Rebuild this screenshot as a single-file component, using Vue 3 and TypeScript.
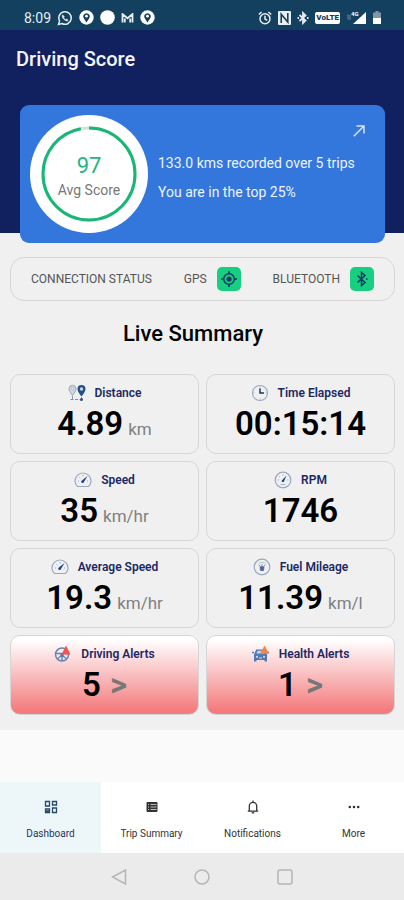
<script setup lang="ts">
type MetricIcon = 'route' | 'clock' | 'speed' | 'rpm' | 'fuel' | 'wheel' | 'car'

interface Metric {
  label: string
  value: string
  unit?: string
  icon: MetricIcon
}

interface Tab {
  label: string
  icon: 'grid' | 'list' | 'bell' | 'dots'
}

const score = 97
const ringLength = 2 * Math.PI * 46

const metrics: Metric[] = [
  { label: 'Distance', value: '4.89', unit: 'km', icon: 'route' },
  { label: 'Time Elapsed', value: '00:15:14', icon: 'clock' },
  { label: 'Speed', value: '35', unit: 'km/hr', icon: 'speed' },
  { label: 'RPM', value: '1746', icon: 'rpm' },
  { label: 'Average Speed', value: '19.3', unit: 'km/hr', icon: 'speed' },
  { label: 'Fuel Mileage', value: '11.39', unit: 'km/l', icon: 'fuel' },
]

const alerts: Metric[] = [
  { label: 'Driving Alerts', value: '5', icon: 'wheel' },
  { label: 'Health Alerts', value: '1', icon: 'car' },
]

const tabs: Tab[] = [
  { label: 'Dashboard', icon: 'grid' },
  { label: 'Trip Summary', icon: 'list' },
  { label: 'Notifications', icon: 'bell' },
  { label: 'More', icon: 'dots' },
]
</script>

<template>
  <div class="screen">
    <div class="status">
      <div class="status-group">
        <span class="time">8:09</span>
        <svg width="16" height="16" viewBox="0 0 16 16" fill="none" stroke="#e6edf2">
          <path d="M1.5 14.5l1-3.4a6.3 6.3 0 1 1 2.4 2.4z" stroke-width="1.5" />
          <path d="M5.600 4.800c-1.200 1.400.2 3.500 1.500 4.700 1.300 1.200 3 2.100 4.100.8l-1.500-1.200-1 .6c-.9-.4-1.600-1.100-2-2l.6-1z" fill="#e6edf2" stroke-width=".6" />
        </svg>
        <svg width="15" height="15" viewBox="0 0 15 15">
          <circle cx="7.500" cy="7.500" r="7.200" fill="#fff" />
          <path d="M7.500 12.500L4.600 8A3.300 3.300 0 1 1 10.400 8z" fill="#14405f" />
          <circle cx="7.500" cy="6.200" r="1.400" fill="#fff" />
        </svg>
        <svg width="15" height="15" viewBox="0 0 15 15"><circle cx="7.500" cy="7.500" r="7.300" fill="#fff" /></svg>
        <svg width="13" height="10" viewBox="0 0 13 10" fill="none" stroke="#e6edf2" stroke-width="1.800">
          <path d="M1.500 9.500V1L6.500 5.200 11.500 1v8.500M3.800 9.500V5.500M9.200 9.500V5.500" />
        </svg>
        <svg width="15" height="15" viewBox="0 0 15 15">
          <circle cx="7.500" cy="7.500" r="7.200" fill="#fff" />
          <path d="M7.500 12.500L4.600 8A3.300 3.300 0 1 1 10.400 8z" fill="#14405f" />
          <circle cx="7.500" cy="6.200" r="1.400" fill="#fff" />
        </svg>
      </div>
      <div class="status-group">
        <svg width="14" height="14" viewBox="0 0 14 14" fill="none" stroke="#e6edf2" stroke-width="1.500">
          <circle cx="7" cy="7.700" r="5" />
          <path d="M7 4.700v3.300l2.200 1.400M.8 3.500L3.600 1M13.200 3.500L10.400 1" />
        </svg>
        <svg width="13" height="14" viewBox="0 0 13 14">
          <rect width="13" height="14" rx="1" fill="#e9eff3" />
          <path d="M3.200 12V3.200L9.800 11V2" fill="none" stroke="#14405f" stroke-width="1.600" />
        </svg>
        <svg width="12" height="14" viewBox="0 0 12 14" fill="none" stroke="#e6edf2" stroke-width="1.800">
          <path d="M2.500 4l6 5.500L6 12V2l2.500 2.500-6 5.500" />
          <path d="M.5 7h1.500M10 7h1.500" />
        </svg>
        <span class="volte">VoLTE</span>
        <svg width="21" height="15" viewBox="0 0 21 15">
          <path d="M2 4.500v5M4 5v5" stroke="#6f8ca0" stroke-width="1" />
          <path d="M20 2v12H7z" fill="#fff" />
          <text x="5" y="6" font-size="6" font-weight="700" fill="#fff">4G</text>
        </svg>
        <svg width="8" height="13" viewBox="0 0 8 13">
          <path d="M2.500 0h3v1.500H8V7H0V1.500h2.500z" fill="#8197a9" />
          <path d="M0 7h8v6H0z" fill="#fff" />
        </svg>
      </div>
    </div>

    <header class="hero">
      <h1>Driving Score</h1>
      <section class="score-card">
        <div class="gauge">
          <svg class="ring" viewBox="0 0 118 118">
            <circle cx="59" cy="59" r="59" fill="#fff" />
            <circle cx="59" cy="59" r="46" fill="none" stroke="#dededb" stroke-width="3" />
            <circle
              cx="59" cy="59" r="46" fill="none" stroke="#17b877" stroke-width="3"
              :stroke-dasharray="`${(ringLength * score) / 100} ${ringLength}`"
              transform="rotate(-90 59 59)"
            />
          </svg>
          <div class="gauge-text">
            <strong>{{ score }}</strong>
            <span>Avg Score</span>
          </div>
        </div>
        <div class="score-info">
          <p>133.0 kms recorded over 5 trips</p>
          <p>You are in the top 25%</p>
        </div>
        <a class="open" href="#score" aria-label="Open score details">
          <svg width="12" height="12" viewBox="0 0 12 12" fill="none" stroke="#d5e3fa" stroke-width="1.500">
            <path d="M.8 11.200L11 1M3.500 1H11v7.500" />
          </svg>
        </a>
      </section>
    </header>

    <main>
      <section class="connection">
        <span>CONNECTION STATUS</span>
        <span class="link-state">
          GPS
          <span class="chip">
            <svg width="16" height="16" viewBox="0 0 16 16" fill="none" stroke="#103a63" stroke-width="1.500">
              <circle cx="8" cy="8" r="5.300" />
              <circle cx="8" cy="8" r="2.600" fill="#103a63" stroke="none" />
              <path d="M8 0v3M8 13v3M0 8h3M13 8h3" />
            </svg>
          </span>
        </span>
        <span class="link-state">
          BLUETOOTH
          <span class="chip">
            <svg width="12" height="16" viewBox="0 0 12 16" fill="none" stroke="#103a63" stroke-width="1.500">
              <path d="M1.500 4.500l7.500 7L5.500 14.500v-13L9 4.500l-7.500 7" />
              <path d="M10 8h1.500" />
            </svg>
          </span>
        </span>
      </section>

      <h2>Live Summary</h2>

      <div class="grid">
        <component
          :is="i < metrics.length ? 'article' : 'button'"
          v-for="(m, i) in [...metrics, ...alerts]"
          :key="m.label"
          class="tile"
          :class="{ alert: i >= metrics.length }"
        >
          <span class="label">
            <svg v-if="m.icon === 'route'" width="18" height="18" viewBox="0 0 18 18">
              <path d="M4.500 11.500C2.600 8.800 1 7 1 4.800a3.500 3.500 0 0 1 7 0c0 2.200-1.600 4-3.500 6.700z" fill="#d5d8e0" stroke="#9ca4b8" />
              <circle cx="4.500" cy="4.700" r="1.300" fill="#f0f0f0" stroke="#9ca4b8" stroke-width=".7" />
              <path d="M13.500 12.500C11.300 9.500 9.500 7.300 9.500 5a4 4 0 0 1 8 0c0 2.300-1.800 4.500-4 7.500z" fill="#24508a" />
              <circle cx="13.500" cy="5" r="1.700" fill="#c3d7ec" />
              <path d="M4.500 12v3M13.500 13v2" stroke="#8f9ab0" />
              <path d="M2.500 15.500h13" stroke="#7c8baa" stroke-dasharray="3 1.500" />
              <circle cx="13.500" cy="15.500" r="1.500" fill="#24508a" />
            </svg>
            <svg v-else-if="m.icon === 'clock'" width="18" height="18" viewBox="0 0 18 18" fill="none">
              <circle cx="9" cy="9" r="7.500" stroke="#9aa8bf" stroke-width="1.100" />
              <path d="M9 4.500V9h4" stroke="#1c3264" stroke-width="1.500" />
              <path d="M9 2.500v1M9 14.500v1M2.500 9h1M14.500 9h1" stroke="#9aa8bf" />
            </svg>
            <svg v-else-if="m.icon === 'speed'" width="18" height="18" viewBox="0 0 18 18" fill="none">
              <path d="M3.500 15.500C1.700 14 1 12.200 1 10a8 8 0 0 1 16 0c0 2.200-.7 4-2.500 5.500z" stroke="#9aa8bf" stroke-width="1.200" />
              <path d="M9 4v1.200M4 10h1M13 10h1M5.500 6.500l.7.700" stroke="#9aa8bf" />
              <path d="M7.300 10L13.500 5l-4 6.800a1.500 1.500 0 0 1-2.200-1.800z" fill="#1d4388" />
            </svg>
            <svg v-else-if="m.icon === 'rpm'" width="18" height="18" viewBox="0 0 18 18" fill="none">
              <circle cx="9" cy="9" r="7.800" stroke="#9aa8bf" stroke-width="1.200" />
              <path d="M9 3v1.500M3.500 9H5M13 9h1.500M5 5l1 1M6.500 13.500h5" stroke="#a9b4c8" />
              <path d="M7.800 9.500L12.500 4.500 10 10.500a1.200 1.200 0 0 1-2.200-1z" fill="#1d4388" />
            </svg>
            <svg v-else-if="m.icon === 'fuel'" width="18" height="18" viewBox="0 0 18 18" fill="none">
              <circle cx="9" cy="9" r="7.800" stroke="#9aa8bf" stroke-width="1.200" />
              <path d="M5 6.500a4.800 4.800 0 0 1 8 0" stroke="#b5bfd0" />
              <path d="M7 8.500h4l-.5 4h-3z" fill="#4a6796" stroke="#4a6796" stroke-width=".8" />
              <path d="M6 7l2 2M9 6v2.500M12 7l-2 2" stroke="#7f93b5" />
            </svg>
            <svg v-else-if="m.icon === 'wheel'" width="18" height="18" viewBox="0 0 18 18" fill="none">
              <circle cx="8" cy="9.500" r="6.500" stroke="#5f86b8" stroke-width="1.500" />
              <path d="M2 8.500h12M8 10.500V16M8 10.500l-4.500 3M8 10.500l4.500 3" stroke="#5f86b8" stroke-width="1.400" />
              <circle cx="8" cy="10" r="1.800" fill="#4b78b0" />
              <path d="M12 .5l4.500 9h-9z" fill="#f25550" />
            </svg>
            <svg v-else width="18" height="18" viewBox="0 0 18 18" fill="none">
              <path d="M2 9.500l2.200-5h8.600L15 9.500v7h-2.500V15h-8v1.500H2z" fill="#4f79b1" />
              <path d="M4.300 8.500l1.400-2.700h5.600L13 8.500z" fill="#c8d5e7" />
              <path d="M0 7.500h2M15 7.500h2" stroke="#4f79b1" stroke-width="1.500" />
              <circle cx="5" cy="11.800" r="1.100" fill="#e9d4da" /><circle cx="12" cy="11.800" r="1.100" fill="#e9d4da" />
              <path d="M7 13h3" stroke="#dbe4f0" />
              <path d="M12.500.5L17 8.500H8z" fill="#f3854c" />
            </svg>
            {{ m.label }}
          </span>
          <span class="reading">
            <strong>{{ m.value }}</strong>
            <small v-if="m.unit">{{ m.unit }}</small>
            <span v-if="i >= metrics.length" class="more">&gt;</span>
          </span>
        </component>
      </div>
    </main>

    <nav class="tabs">
      <a v-for="(t, i) in tabs" :key="t.label" href="#" :class="{ active: i === 0 }">
        <svg v-if="t.icon === 'grid'" width="14" height="14" viewBox="0 0 14 14" fill="none" stroke="#234a66" stroke-width="1.300">
          <path d="M1.500 1.500h4v4.500h-4zM8.500 1.500h4v3.500h-4zM1.500 9h4v3.500h-4zM8.500 8h4v4.500h-4zM1.500 11h4" />
        </svg>
        <svg v-else-if="t.icon === 'list'" width="14" height="14" viewBox="0 0 14 14">
          <rect x="1.500" y="2" width="11" height="10" rx="1" fill="#333" />
          <path d="M5.500 4.500h6M5.500 7h6M5.500 9.500h6" stroke="#bbb" />
          <path d="M3 4.500h1M3 7h1M3 9.500h1" stroke="#bbb" />
        </svg>
        <svg v-else-if="t.icon === 'bell'" width="14" height="14" viewBox="0 0 14 14" fill="none" stroke="#333" stroke-width="1.300">
          <path d="M1.800 11.200h10.400M3.300 11V6a3.700 3.700 0 0 1 7.400 0v5M7 .5v2" />
          <path d="M5.700 12.800h2.600" />
        </svg>
        <svg v-else width="14" height="14" viewBox="0 0 14 14" fill="#333">
          <circle cx="2.800" cy="7" r="1.300" /><circle cx="7" cy="7" r="1.300" /><circle cx="11.200" cy="7" r="1.300" />
        </svg>
        {{ t.label }}
      </a>
    </nav>

    <div class="system">
      <button aria-label="Back">
        <svg width="16" height="16" viewBox="0 0 16 16"><path d="M14.500 1v14L1.500 8z" /></svg>
      </button>
      <button aria-label="Home">
        <svg width="16" height="16" viewBox="0 0 16 16"><circle cx="8" cy="8" r="7" /></svg>
      </button>
      <button aria-label="Recent apps">
        <svg width="16" height="16" viewBox="0 0 16 16"><rect x="1" y="1" width="14" height="14" rx="2" /></svg>
      </button>
    </div>
  </div>
</template>

<style>
body {
  background: #fafafa;
}
</style>

<style scoped>
* {
  box-sizing: border-box;
}

.screen {
  display: flex;
  flex-direction: column;
  min-height: 100vh;
  font-family: Roboto, "Liberation Sans", sans-serif;
  color: #000;
  background: #fafafa;
}

svg {
  display: block;
  flex: none;
}

h1,
h2,
p {
  margin: 0;
}

button {
  border: 0;
  padding: 0;
  background: none;
  font: inherit;
  color: inherit;
}

.status {
  display: flex;
  justify-content: space-between;
  height: 30px;
  padding: 5px 23px 0 24px;
  background: #14405f;
}

.status-group {
  display: flex;
  align-items: center;
  gap: 6px;
}

.time {
  font-size: 14px;
  color: #e6edf2;
}

.volte {
  padding: 0 1px;
  border-radius: 2px;
  background: #fff;
  color: #14405f;
  font-size: 8px;
  font-weight: 900;
  line-height: 12px;
}

.hero {
  padding: 16px 19px 0 20px;
  background: linear-gradient(to top, #f0f0f0 10px, #11205f 10px);
}

h1 {
  margin: 0 -4px 33px;
  font-size: 20px;
  font-weight: 500;
  line-height: 26px;
  color: #f3f5fb;
}

.score-card {
  position: relative;
  display: flex;
  align-items: center;
  gap: 10px;
  min-height: 138px;
  padding: 0 10px;
  border-radius: 9px;
  background: #3377dd;
  color: #eef4ff;
}

.gauge {
  display: grid;
  flex: none;
  place-items: center;
  width: 118px;
}

.ring,
.gauge-text {
  grid-area: 1 / 1;
}

.ring {
  width: 100%;
}

.gauge-text {
  display: flex;
  flex-direction: column;
  align-items: center;
  padding-top: 4px;
  color: #777;
  font-size: 14px;
  line-height: 20px;
}

.gauge-text strong {
  color: #26b47c;
  font-size: 22px;
  font-weight: 400;
  line-height: 28px;
}

.score-info {
  display: grid;
  gap: 9px;
  font-size: 14px;
  line-height: 20px;
  padding-top: 6px;
}

.open {
  position: absolute;
  top: 20px;
  right: 20px;
}

main {
  padding: 14px 9px 15px 10px;
  background: #f0f0f0;
}

.connection {
  display: flex;
  align-items: center;
  justify-content: space-between;
  height: 44px;
  padding: 0 20px;
  border: 1px solid #d6d6d6;
  border-radius: 14px;
  color: #555;
  font-size: 12px;
}

.link-state {
  display: flex;
  align-items: center;
  gap: 10px;
}

.chip {
  display: grid;
  place-items: center;
  width: 24px;
  height: 24px;
  border-radius: 5px;
  background: #17cf80;
}

h2 {
  margin: 17px 0 24px;
  padding-right: 19px;
  font-size: 22px;
  font-weight: 500;
  line-height: 32px;
  text-align: center;
}

.grid {
  display: grid;
  grid-template-columns: 1fr 1fr;
  gap: 7px;
}

.tile {
  display: flex;
  flex-direction: column;
  align-items: center;
  height: 80px;
  padding: 9px 0 0;
  border: 1px solid #d6d6d6;
  border-radius: 10px;
}

.tile.alert {
  background: linear-gradient(#fff 5%, #f47c7e 95%);
}

.label {
  display: flex;
  align-items: center;
  gap: 9px;
  color: #1c2864;
  font-size: 12px;
  font-weight: 600;
  line-height: 18px;
}

.reading {
  display: flex;
  align-items: baseline;
  gap: 5px;
  font-size: 33px;
  line-height: 44px;
}

.reading strong {
  font-weight: 600;
}

.reading small {
  color: #808080;
  font-size: 17px;
}

.more {
  margin-left: 4px;
  color: #777;
  font-weight: 600;
}

.tabs {
  display: grid;
  grid-template-columns: repeat(4, 1fr);
  margin-top: auto;
  background: #fff;
}

.tabs a {
  display: flex;
  flex-direction: column;
  align-items: center;
  gap: 14px;
  height: 71px;
  padding-top: 18px;
  color: #333;
  font-size: 10px;
  line-height: 12px;
  text-decoration: none;
}

.tabs .active {
  background: #edf7fa;
  color: #29335f;
}

.system {
  display: flex;
  align-items: center;
  justify-content: center;
  gap: 67px;
  height: 47px;
  background: #ebebeb;
}

.system svg {
  fill: none;
  stroke: #b5b5b5;
  stroke-width: 1.5;
}
</style>
